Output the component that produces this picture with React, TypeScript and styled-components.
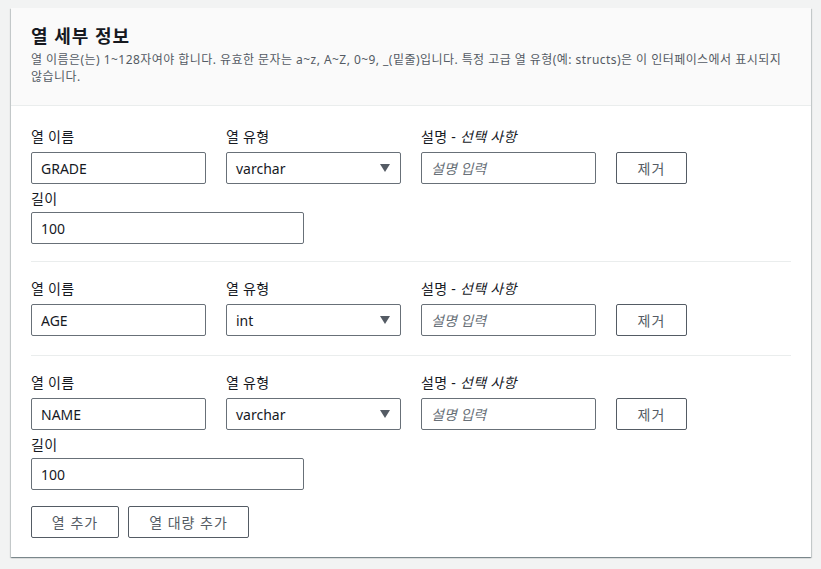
import React from "react";
import styled, { createGlobalStyle } from "styled-components";

const GlobalStyle = createGlobalStyle`
  html, body {
    margin: 0;
    padding: 0;
    background: #f2f3f3;
  }
  body {
    font-family: "Noto Sans", "Noto Sans CJK KR", sans-serif;
    color: #16191f;
  }
  * { box-sizing: border-box; }
`;

const Page = styled.div`
  padding: 8px 10px 12px 11px;
`;

const Card = styled.section`
  width: 800px;
  background: #ffffff;
  box-shadow: 0 1px 1px 0 rgba(0, 28, 36, 0.3), 1px 1px 1px 0 rgba(0, 28, 36, 0.15),
    -1px 1px 1px 0 rgba(0, 28, 36, 0.15);
`;

const Header = styled.header`
  background: #fafafa;
  border-bottom: 1px solid #eaeded;
  padding: 17px 20px 20px;
`;

const Title = styled.h2`
  margin: 0;
  font-size: 18px;
  line-height: 22px;
  letter-spacing: 1px;
  font-weight: 700;
  color: #16191f;
`;

const Description = styled.p`
  margin: 4px 0 0;
  font-size: 12px;
  line-height: 17px;
  letter-spacing: 0.45px;
  color: #545b64;
`;

const Body = styled.div`
  padding: 20px 20px 19px;
`;

const ColumnRow = styled.div<{ $tail: number }>`
  display: grid;
  grid-template-columns: 175px 175px 175px 71px;
  column-gap: 20px;
  align-items: end;
  padding-bottom: ${(p) => p.$tail}px;
`;

const Divider = styled.hr`
  border: none;
  border-top: 1px solid #eaeded;
  margin: 0 0 16px;
`;

const Field = styled.div`
  display: flex;
  flex-direction: column;
`;

const LengthField = styled.div`
  display: flex;
  flex-direction: column;
  width: 273px;
  margin-top: 4px;
  grid-column: 1 / span 2;
`;

const Label = styled.label<{ $gap?: number }>`
  font-size: 14px;
  line-height: 22px;
  letter-spacing: 0.3px;
  color: #16191f;
  margin-bottom: ${(p) => p.$gap ?? 4}px;
  em {
    font-style: italic;
  }
`;

const TextInput = styled.input`
  height: 32px;
  width: 100%;
  border: 1px solid #687078;
  border-radius: 2px;
  padding: 0 9px;
  font-family: "Noto Sans", "Noto Sans CJK KR", sans-serif;
  font-size: 14px;
  color: #16191f;
  background: #ffffff;
  outline: none;
  &::placeholder {
    color: #687078;
    font-style: italic;
  }
`;

const SelectBox = styled.div`
  height: 32px;
  border: 1px solid #687078;
  border-radius: 2px;
  padding: 0 10px 0 9px;
  display: flex;
  align-items: center;
  justify-content: space-between;
  font-size: 14px;
  color: #16191f;
  background: #ffffff;
`;

const Caret = styled.svg`
  width: 10px;
  height: 8px;
  display: block;
`;

const Button = styled.button<{ $width: number }>`
  height: 32px;
  width: ${(p) => p.$width}px;
  border: 1px solid #545b64;
  border-radius: 2px;
  background: #ffffff;
  color: #545b64;
  font-family: "Noto Sans", "Noto Sans CJK KR", sans-serif;
  font-size: 14px;
  letter-spacing: 1px;
  padding: 0;
  cursor: pointer;
`;

const Actions = styled.div`
  display: flex;
  gap: 9px;
  margin-top: 16px;
`;

type Col = { name: string; type: string; length?: string };

const columns: Col[] = [
  { name: "GRADE", type: "varchar", length: "100" },
  { name: "AGE", type: "int" },
  { name: "NAME", type: "varchar", length: "100" },
];

function Row({ col, last }: { col: Col; last: boolean }) {
  return (
    <>
      <ColumnRow $tail={last ? 0 : col.length ? 17 : 19}>
        <Field>
          <Label>열 이름</Label>
          <TextInput defaultValue={col.name} />
        </Field>
        <Field>
          <Label>열 유형</Label>
          <SelectBox>
            <span>{col.type}</span>
            <Caret viewBox="0 0 10 8">
              <path d="M0 0 H10 L5 8 Z" fill="#545b64" />
            </Caret>
          </SelectBox>
        </Field>
        <Field>
          <Label>
            설명 - <em>선택 사항</em>
          </Label>
          <TextInput placeholder="설명 입력" />
        </Field>
        <Button $width={71}>제거</Button>
        {col.length && (
          <LengthField>
            <Label $gap={2}>길이</Label>
            <TextInput defaultValue={col.length} />
          </LengthField>
        )}
      </ColumnRow>
      {!last && <Divider />}
    </>
  );
}

export default function App() {
  return (
    <>
      <GlobalStyle />
      <Page>
        <Card>
          <Header>
            <Title>열 세부 정보</Title>
            <Description>
              열 이름은(는) 1~128자여야 합니다. 유효한 문자는 a~z, A~Z, 0~9, _(밑줄)입니다. 특정 고급 열
              유형(예: structs)은 이 인터페이스에서 표시되지 않습니다.
            </Description>
          </Header>
          <Body>
            {columns.map((c, i) => (
              <Row key={i} col={c} last={i === columns.length - 1} />
            ))}
            <Actions>
              <Button $width={88}>열 추가</Button>
              <Button $width={121}>열 대량 추가</Button>
            </Actions>
          </Body>
        </Card>
      </Page>
    </>
  );
}
